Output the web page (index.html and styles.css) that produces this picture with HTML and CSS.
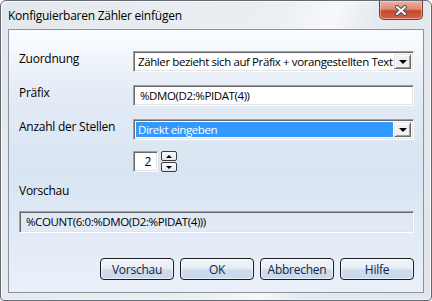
FILE: index.html
```html
<!DOCTYPE html>
<html lang="de">
<head>
  <meta charset="UTF-8">
  <title>Konfiguierbaren Zähler einfügen</title>
  <link rel="stylesheet" href="styles.css">
</head>
<body>
  <div class="window">
    <div class="titlebar">
      <span class="title">Konfiguierbaren Zähler einfügen</span>
      <div class="close">
        <svg width="14" height="11" viewBox="0 0 14 11">
          <path d="M3 2 L11 9 M11 2 L3 9" stroke="#4a4f55" stroke-width="4" stroke-linecap="round"/>
          <path d="M3 2 L11 9 M11 2 L3 9" stroke="#fff" stroke-width="2" stroke-linecap="round"/>
        </svg>
      </div>
    </div>

    <div class="client">
      <div class="form">
        <span class="label">Zuordnung</span>
        <div class="combo">
          <span class="combo-text">Zähler bezieht sich auf Präfix + vorangestellten Text</span>
          <span class="drop"><span class="tri"></span></span>
        </div>

        <span class="label">Präfix</span>
        <div class="edit">%DMO(D2:%PIDAT(4))</div>

        <span class="label">Anzahl der Stellen</span>
        <div class="combo">
          <span class="combo-text selected">Direkt eingeben</span>
          <span class="drop"><span class="tri"></span></span>
        </div>

        <span></span>
        <div class="spin">
          <div class="spin-box">2</div>
          <div class="spin-arrows">
            <span class="spin-btn"><span class="tri up"></span></span>
            <span class="spin-btn"><span class="tri"></span></span>
          </div>
        </div>
      </div>

      <div class="preview-label">Vorschau</div>
      <div class="edit readonly">%COUNT(6:0:%DMO(D2:%PIDAT(4)))</div>

      <div class="buttons">
        <button>Vorschau</button>
        <button>OK</button>
        <button>Abbrechen</button>
        <button>Hilfe</button>
      </div>
    </div>
  </div>
</body>
</html>
```

FILE: styles.css
```css
body {
  margin: 0;
  background: #fff;
  font-family: "Open Sans", "Noto Sans", sans-serif;
  font-size: 12px;
  letter-spacing: -0.25px;
  color: #000;
}

.window {
  width: 432px;
  height: 301px;
  box-sizing: border-box;
  border: 1px solid #646b74;
  border-radius: 6px 6px 4px 4px;
  background: linear-gradient(105deg, #e4e8ec 0%, #eceff2 55%, #f7f8fa 66%, #e6eaee 74%, #e2e6eb 100%);
  padding: 0 7px 7px 7px;
  box-shadow: inset 1px 1px #f6f8fa, inset -1px -1px #f2f4f7;
}

.titlebar {
  height: 28px;
  display: flex;
  align-items: flex-start;
  justify-content: space-between;
}

.title {
  margin-top: 6px;
  color: #000;
}

.close {
  width: 44px;
  height: 19px;
  margin-right: 1px;
  box-sizing: border-box;
  border: 1px solid #7b3b32;
  border-top: none;
  border-radius: 0 0 5px 5px;
  background: linear-gradient(#eab3a5 0%, #dc8a75 45%, #c7472f 55%, #d2624a 100%);
  box-shadow: inset 0 0 0 1px rgba(255, 220, 210, 0.5);
  display: flex;
  align-items: center;
  justify-content: center;
}

.client {
  height: 264px;
  box-sizing: border-box;
  border: 1px solid #8a939e;
  background: linear-gradient(#fbfcfe 0%, #e3ebf6 25%, #d9e4f2 55%, #e4ecf8 85%, #e9f0fa 100%);
  padding: 21px 9px 0 10px;
}

.form {
  display: grid;
  grid-template-columns: 114px 281px;
  row-gap: 13px;
}

.label {
  line-height: 15px;
}

.combo,
.edit {
  height: 21px;
  box-sizing: border-box;
  border: 1px solid;
  border-color: #a0a0a0 #fff #fff #a0a0a0;
  box-shadow: inset 1px 1px #696969, inset -1px -1px #e3e3e3;
  background: #fff;
  font-size: 11.5px;
  letter-spacing: -0.4px;
}

.combo {
  display: flex;
  padding: 2px;
}

.combo-text {
  flex: 1;
  line-height: 15px;
  padding-left: 2px;
  white-space: nowrap;
  overflow: hidden;
}

.combo-text.selected {
  background: #3399ff;
  color: #fff;
  margin-right: 1px;
}

.drop {
  width: 17px;
  box-sizing: border-box;
  background: #f0f0f0;
  border: 1px solid;
  border-color: #e3e3e3 #696969 #696969 #e3e3e3;
  box-shadow: inset 1px 1px #fff, inset -1px -1px #a0a0a0;
  display: flex;
  align-items: center;
  justify-content: center;
}

.tri {
  width: 0;
  height: 0;
  border-left: 4px solid transparent;
  border-right: 4px solid transparent;
  border-top: 4px solid #000;
}

.tri.up {
  border-top: none;
  border-bottom: 4px solid #000;
}

.edit {
  padding: 2px 6px;
  line-height: 15px;
}

.spin {
  display: flex;
  gap: 3px;
  margin-top: -2px;
}

.spin-box {
  width: 25px;
  height: 21px;
  box-sizing: border-box;
  border: 1px solid;
  border-color: #a0a0a0 #fff #fff #a0a0a0;
  box-shadow: inset 1px 1px #696969, inset -1px -1px #e3e3e3;
  background: #fff;
  text-align: right;
  padding: 2px 6px 0 0;
  line-height: 15px;
}

.spin-arrows {
  display: flex;
  flex-direction: column;
  gap: 1px;
}

.spin-btn {
  width: 16px;
  height: 10px;
  box-sizing: border-box;
  border: 1px solid #3c3c3c;
  border-radius: 2px;
  background: linear-gradient(#fbfbfb, #e6e8ec);
  display: flex;
  align-items: center;
  justify-content: center;
}

.spin-btn .tri {
  border-left-width: 3px;
  border-right-width: 3px;
  border-top-width: 3px;
}

.spin-btn .tri.up {
  border-bottom-width: 3px;
}

.preview-label {
  margin-top: 11px;
  line-height: 15px;
}

.edit.readonly {
  background: transparent;
  margin-top: 13px;
  width: 395px;
  height: 22px;
}

.buttons {
  display: flex;
  justify-content: flex-end;
  gap: 6px;
  margin-top: 25px;
}

.buttons button {
  width: 74px;
  height: 22px;
  font-family: inherit;
  font-size: 12px;
  letter-spacing: -0.25px;
  color: #142440;
  border: 1px solid #1c1c1c;
  border-radius: 4px;
  background: linear-gradient(#f3f6fa 0%, #e6edf6 45%, #cfdcee 55%, #c8d7ec 100%);
  box-shadow: inset 0 0 0 1px rgba(255, 255, 255, 0.6);
  padding: 0;
}
```
